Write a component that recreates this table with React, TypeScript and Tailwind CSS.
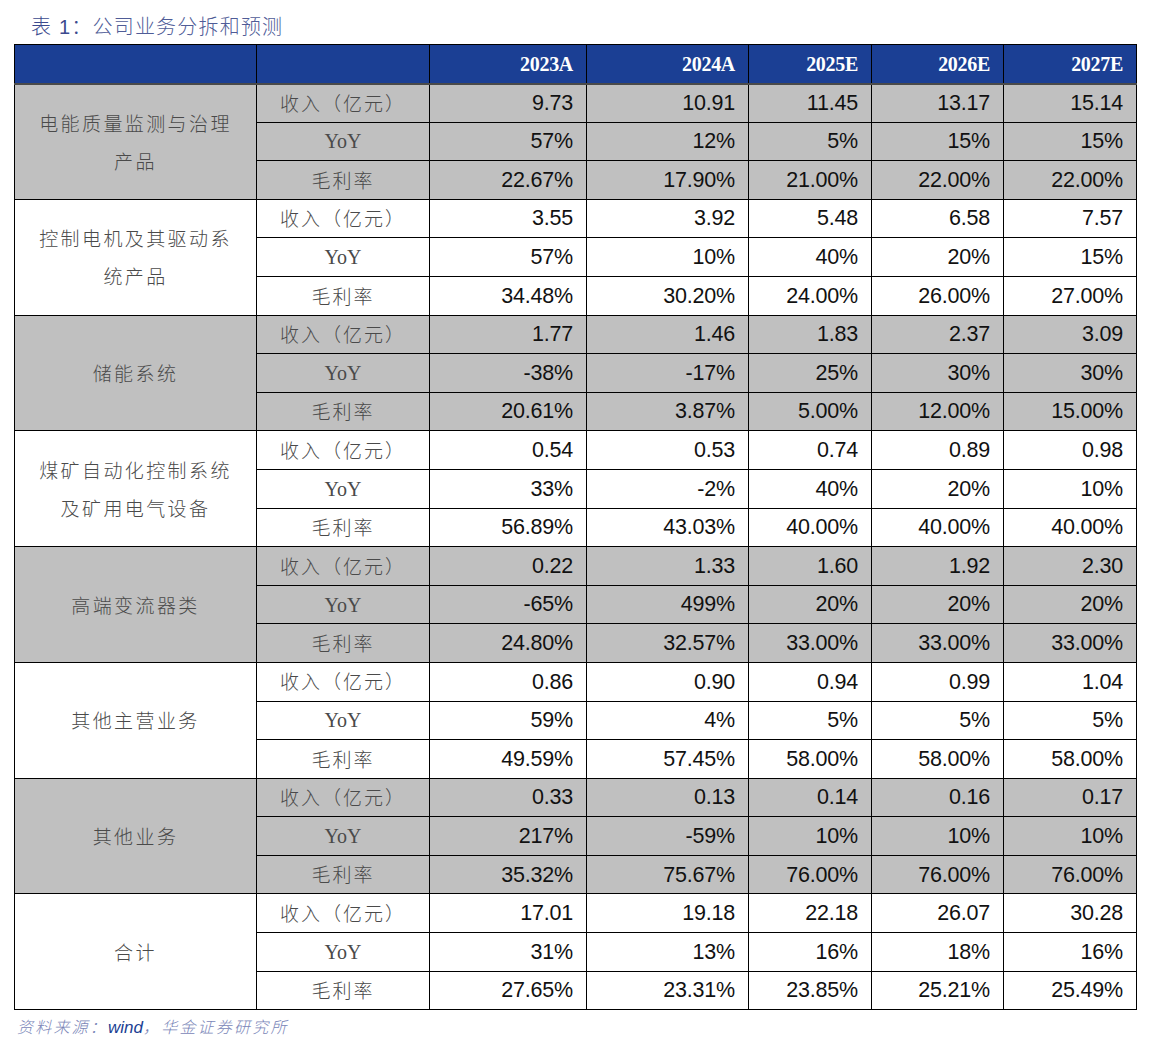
import React from 'react'

type Group = {
  name: React.ReactNode
  shaded: boolean
  rev: string[]
  yoy: string[]
  margin: string[]
}

const years = ['2023A', '2024A', '2025E', '2026E', '2027E']

const groups: Group[] = [
  {
    name: <>电能质量监测与治理<br />产品</>,
    shaded: true,
    rev: ['9.73', '10.91', '11.45', '13.17', '15.14'],
    yoy: ['57%', '12%', '5%', '15%', '15%'],
    margin: ['22.67%', '17.90%', '21.00%', '22.00%', '22.00%'],
  },
  {
    name: <>控制电机及其驱动系<br />统产品</>,
    shaded: false,
    rev: ['3.55', '3.92', '5.48', '6.58', '7.57'],
    yoy: ['57%', '10%', '40%', '20%', '15%'],
    margin: ['34.48%', '30.20%', '24.00%', '26.00%', '27.00%'],
  },
  {
    name: '储能系统',
    shaded: true,
    rev: ['1.77', '1.46', '1.83', '2.37', '3.09'],
    yoy: ['-38%', '-17%', '25%', '30%', '30%'],
    margin: ['20.61%', '3.87%', '5.00%', '12.00%', '15.00%'],
  },
  {
    name: <>煤矿自动化控制系统<br />及矿用电气设备</>,
    shaded: false,
    rev: ['0.54', '0.53', '0.74', '0.89', '0.98'],
    yoy: ['33%', '-2%', '40%', '20%', '10%'],
    margin: ['56.89%', '43.03%', '40.00%', '40.00%', '40.00%'],
  },
  {
    name: '高端变流器类',
    shaded: true,
    rev: ['0.22', '1.33', '1.60', '1.92', '2.30'],
    yoy: ['-65%', '499%', '20%', '20%', '20%'],
    margin: ['24.80%', '32.57%', '33.00%', '33.00%', '33.00%'],
  },
  {
    name: '其他主营业务',
    shaded: false,
    rev: ['0.86', '0.90', '0.94', '0.99', '1.04'],
    yoy: ['59%', '4%', '5%', '5%', '5%'],
    margin: ['49.59%', '57.45%', '58.00%', '58.00%', '58.00%'],
  },
  {
    name: '其他业务',
    shaded: true,
    rev: ['0.33', '0.13', '0.14', '0.16', '0.17'],
    yoy: ['217%', '-59%', '10%', '10%', '10%'],
    margin: ['35.32%', '75.67%', '76.00%', '76.00%', '76.00%'],
  },
  {
    name: '合计',
    shaded: false,
    rev: ['17.01', '19.18', '22.18', '26.07', '30.28'],
    yoy: ['31%', '13%', '16%', '18%', '16%'],
    margin: ['27.65%', '23.31%', '23.85%', '25.21%', '25.49%'],
  },
]

const cjk = "font-['Noto_Sans_CJK_SC',sans-serif] font-light"

export default function App() {
  return (
    <div className="w-[1156px] h-[1060px] bg-white relative">
      {/* Title */}
      <div className="pl-[31px] pt-[14px] h-[44px] text-[20px] leading-[26px] text-[#4f5c97] font-['Liberation_Sans','Noto_Sans_CJK_SC',sans-serif] font-light tracking-[1.2px]">
        <span className="text-[#3b4a8e]">表 1：</span>公司业务分拆和预测
      </div>

      <table className="ml-[14px] border-collapse table-fixed w-[1122px] border border-black">
        <colgroup>
          <col className="w-[242px]" />
          <col className="w-[173px]" />
          <col className="w-[157px]" />
          <col className="w-[162px]" />
          <col className="w-[123px]" />
          <col className="w-[132px]" />
          <col className="w-[133px]" />
        </colgroup>
        <thead>
          <tr className="h-[39px] bg-[#1b3f94] border-b-2 border-b-[#4a4a4a]">
            <th className="border-r border-black" />
            <th className="border-r border-black" />
            {years.map((y) => (
              <th
                key={y}
                className="border-r border-black text-right pr-[13px] text-white font-bold text-[20px] font-['Liberation_Serif',serif] tracking-[-0.3px]"
              >
                {y}
              </th>
            ))}
          </tr>
        </thead>
        <tbody>
          {groups.map((g, gi) => {
            const bg = g.shaded ? 'bg-[#c0c0c0]' : 'bg-white'
            const rows: [React.ReactNode, string[]][] = [
              ['收入（亿元）', g.rev],
              ['YoY', g.yoy],
              ['毛利率', g.margin],
            ]
            return rows.map(([label, vals], ri) => (
              <tr key={`${gi}-${ri}`} className={`h-[38.6px] ${bg}`}>
                {ri === 0 && (
                  <td
                    rowSpan={3}
                    className={`border border-black text-center text-[19px] leading-[38px] tracking-[2.4px] text-[#4a4a4a] ${cjk}`}
                  >
                    {g.name}
                  </td>
                )}
                <td
                  className={`border border-black text-center text-[19px] text-[#4a4a4a] ${
                    label === 'YoY'
                      ? "font-['Liberation_Serif',serif] text-[20px]"
                      : `${cjk} tracking-[2px]`
                  }`}
                >
                  {label}
                </td>
                {vals.map((v, vi) => (
                  <td
                    key={vi}
                    className="border border-black text-right pr-[13px] text-[21.5px] text-[#111] font-['Liberation_Sans',sans-serif] tracking-[-0.2px]"
                  >
                    {v}
                  </td>
                ))}
              </tr>
            ))
          })}
        </tbody>
      </table>

      {/* Source */}
      <div className="pl-[17px] pt-[5px] text-[16px] italic text-[#7a86b8] tracking-[2.2px] font-['Liberation_Sans','Noto_Sans_CJK_SC',sans-serif] font-light">
        资料来源：<span className="text-[#1b3f94] font-normal tracking-normal text-[17px]">wind</span>，华金证券研究所
      </div>
    </div>
  )
}
